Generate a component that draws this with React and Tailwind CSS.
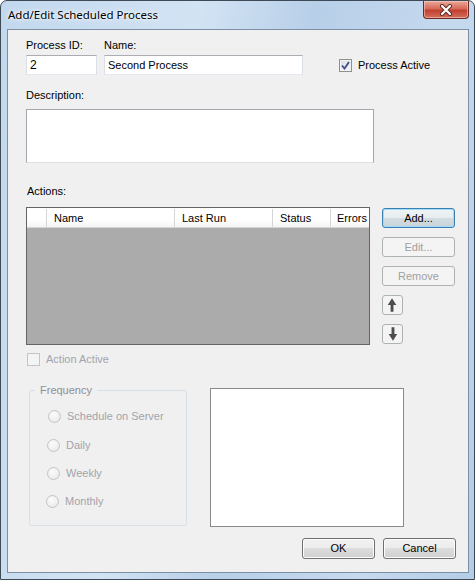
import React from "react";

const btn =
  "flex items-center justify-center rounded-[3px] border text-[11px] leading-[13px]";
const btnNormal =
  "border-[#707070] bg-[linear-gradient(#f2f2f2_0%,#ebebeb_50%,#dddddd_50%,#cfcfcf_100%)] shadow-[inset_0_0_0_1px_#fcfcfc] text-black";
const btnDisabled = "border-[#adb2b5] bg-[#f4f4f4] text-[#a0a0a0]";

const Arrow = ({ down }) => (
  <svg width="20" height="20" viewBox="0 0 20 20" className={down ? "rotate-180" : ""}>
    <path d="M9.5 3 L14 10 H11 V17 H8 V10 H5 Z" fill="#4d4d4d" />
  </svg>
);

const Radio = ({ label, offset }) => (
  <div className={`flex h-[13px] items-center ${offset}`}>
    <span className="h-[13px] w-[13px] rounded-full border border-[#c4c4c4] bg-[radial-gradient(circle_at_40%_35%,#fbfbfb,#e6e6e6)]" />
    <span className="ml-[6px] text-[#a3a3ac]">{label}</span>
  </div>
);

export default function App() {
  return (
    <div className="relative h-[580px] w-[475px] overflow-hidden rounded-t-[7px] border border-[#3f4a57] bg-[linear-gradient(100deg,#c2d8ee_0%,#d2e3f3_35%,#b8cfe9_55%,#c6daef_80%,#b4cce7_100%)] font-['Liberation_Sans',Arial,sans-serif] text-[11px] leading-[13px] text-black">
      {/* title bar */}
      <div className="flex h-[28px] items-start">
        <div className="pl-[7px] pt-[6px] font-['Noto_Sans',sans-serif] text-[11.5px] leading-[15px] [text-shadow:0_0_6px_#fff,0_0_3px_#fff]">
          Add/Edit Scheduled Process
        </div>
        <div className="ml-auto mr-[5px] flex h-[18px] w-[46px] items-center justify-center rounded-b-[4px] border border-t-0 border-[#6b2a22] bg-[linear-gradient(#eaa99b_0%,#d86a58_45%,#c2402f_55%,#d3705f_100%)] shadow-[inset_0_0_0_1px_rgba(255,220,210,0.5)]">
          <svg width="14" height="12" viewBox="0 0 14 12">
            <path d="M3 2 L11 10 M11 2 L3 10" stroke="#5a2a24" strokeWidth="4" strokeLinecap="round" />
            <path d="M3 2 L11 10 M11 2 L3 10" stroke="#fff" strokeWidth="2.2" strokeLinecap="round" />
          </svg>
        </div>
      </div>

      {/* client area */}
      <div className="ml-[6px] h-[544px] w-[462px] border border-[#7d8fa3] bg-[#f0f0f0]">
        <div className="flex pl-[18px] pt-[9px]">
          <div className="w-[71px]">
            <div className="h-[13px]">Process ID:</div>
            <div className="mt-[3px] flex h-[20px] items-center border border-[#abadb3] border-x-[#dbdfe6] border-b-[#e3e9ef] bg-white pl-[3px] text-[12px]">
              2
            </div>
          </div>
          <div className="ml-[7px] w-[199px]">
            <div className="h-[13px]">Name:</div>
            <div className="mt-[3px] flex h-[20px] items-center border border-[#abadb3] border-x-[#dbdfe6] border-b-[#e3e9ef] bg-white pl-[3px] text-[11px]">
              Second Process
            </div>
          </div>
          <div className="ml-[36px] mt-[20px] flex h-[13px] items-center">
            <span className="flex h-[13px] w-[13px] items-center justify-center border border-[#8f8f8f] bg-[linear-gradient(135deg,#dcdcdc,#f8f8f8)] shadow-[inset_0_0_0_1px_#f4f4f4]">
              <svg width="9" height="9" viewBox="0 0 9 9">
                <path d="M1 4.5 L3.5 7.5 L8 1" stroke="#3b4f8c" strokeWidth="1.8" fill="none" />
              </svg>
            </span>
            <span className="ml-[6px]">Process Active</span>
          </div>
        </div>

        <div className="ml-[18px] mt-[14px] h-[13px]">Description:</div>
        <div className="ml-[18px] mt-[7px] h-[54px] w-[348px] border border-[#a3a8ae] border-b-[#dde1e6] bg-white" />

        <div className="ml-[19px] mt-[22px] h-[13px]">Actions:</div>
        <div className="ml-[18px] mt-[9px] flex">
          <div className="flex h-[138px] w-[344px] flex-col border border-[#646464] bg-[#ababab]">
            <div className="flex h-[20px] border-b border-[#d5d5d5] bg-[linear-gradient(#ffffff_0%,#ffffff_60%,#f3f4f6_100%)] pt-[1px]">
              <div className="w-[20px] border-r border-[#d5d5d5]" />
              <div className="flex w-[128px] items-center border-r border-[#d5d5d5] pl-[7px]">Name</div>
              <div className="flex w-[98px] items-center border-r border-[#d5d5d5] pl-[7px]">Last Run</div>
              <div className="flex w-[58px] items-center border-r border-[#d5d5d5] pl-[7px]">Status</div>
              <div className="flex flex-1 items-center pl-[6px]">Errors</div>
            </div>
          </div>
          <div className="ml-[12px] flex flex-col gap-[9px] pt-[1px]">
            <div className={`${btn} h-[20px] w-[73px] border-[#3c7fb1] bg-[linear-gradient(#f0f4f6_0%,#e6ecef_50%,#d3dde2_50%,#c8d4da_100%)] shadow-[inset_0_0_0_1px_#9fdcf8]`}>
              Add...
            </div>
            <div className={`${btn} ${btnDisabled} h-[20px] w-[73px]`}>Edit...</div>
            <div className={`${btn} ${btnDisabled} h-[20px] w-[73px]`}>Remove</div>
            <div className={`${btn} ${btnDisabled} h-[20px] w-[21px]`}>
              <Arrow />
            </div>
            <div className={`${btn} ${btnDisabled} h-[20px] w-[21px]`}>
              <Arrow down />
            </div>
          </div>
        </div>

        <div className="ml-[19px] mt-[8px] flex h-[13px] items-center">
          <span className="h-[13px] w-[13px] border border-[#c4c4c4] bg-[#f4f4f4]" />
          <span className="ml-[6px] text-[#a3a3ac]">Action Active</span>
        </div>

        <div className="mt-[18px] flex items-start">
          <fieldset className="ml-[21px] h-[142px] w-[158px] rounded-[3px] border border-[#d5dfe5]">
            <legend className="ml-[5px] px-[5px] leading-[13px] text-[#8f8f96]">Frequency</legend>
            <div className="flex flex-col">
              <Radio label="Schedule on Server" offset="ml-[18px] mt-[13px]" />
              <Radio label="Daily" offset="ml-[17px] mt-[16px]" />
              <Radio label="Weekly" offset="ml-[17px] mt-[15px]" />
              <Radio label="Monthly" offset="ml-[16px] mt-[15px]" />
            </div>
          </fieldset>
          <div className="ml-[23px] mt-[4px] h-[139px] w-[194px] border border-[#8a8a8a] bg-white" />
        </div>

        <div className="mt-[11px] flex justify-end gap-[8px] pr-[12px]">
          <div className={`${btn} ${btnNormal} h-[21px] w-[73px]`}>OK</div>
          <div className={`${btn} ${btnNormal} h-[21px] w-[73px]`}>Cancel</div>
        </div>
      </div>
    </div>
  );
}
